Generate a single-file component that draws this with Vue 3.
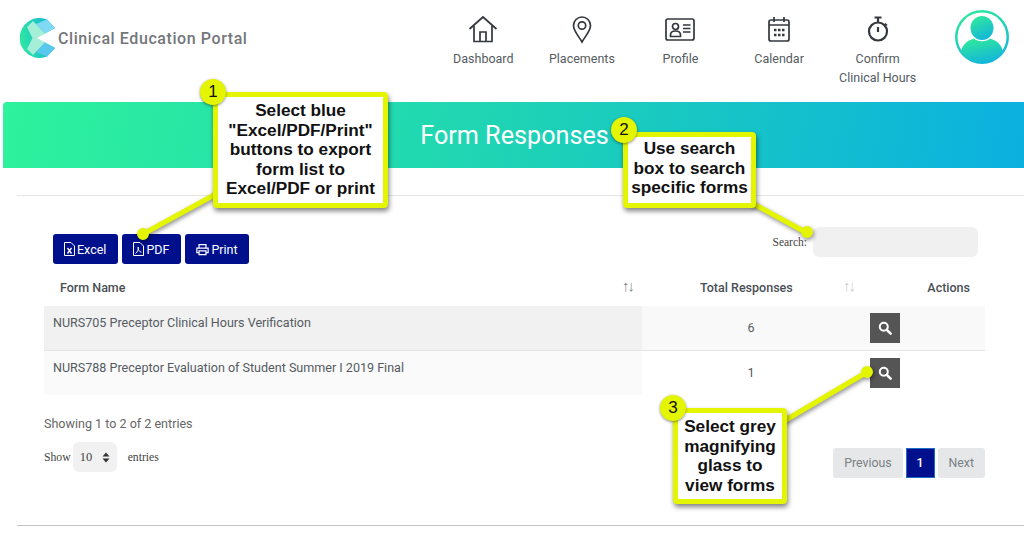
<script setup>
const navItems = [
  { label: 'Dashboard', icon: 'home' },
  { label: 'Placements', icon: 'pin' },
  { label: 'Profile', icon: 'card' },
  { label: 'Calendar', icon: 'cal' },
  { label: 'Confirm Clinical Hours', icon: 'watch' }
]
const rows = [
  { name: 'NURS705 Preceptor Clinical Hours Verification', total: 6 },
  { name: 'NURS788 Preceptor Evaluation of Student Summer I 2019 Final', total: 1 }
]
</script>

<template>
  <div class="page">
    <header class="top">
      <div class="brand">
        <svg class="logo" width="36" height="42" viewBox="0 0 36 42">
          <defs>
            <linearGradient id="lg" x1="0" y1="0.6" x2="1" y2="0.4">
              <stop offset="0" stop-color="#2fe8a0" />
              <stop offset="1" stop-color="#12b2dc" />
            </linearGradient>
          </defs>
          <path d="M35 10L27 1.4A20 20 0 1 0 27 38.6L35 30L24 24L12.5 20L24 16Z" fill="url(#lg)" />
          <path d="M7 9L12.5 20L7 31L13 37L25 24.5L17 20L25 15.500L13 3Z" fill="#a5eed8" />
          <path d="M27 1.600L35 10L25 15.500L16 6Z" fill="#7fd8f4" />
          <path d="M27 38.400L35 30L25 24.500L16 34Z" fill="#58c8ec" />
        </svg>
        <span class="brand-name">Clinical Education Portal</span>
      </div>
      <nav class="nav">
        <a v-for="item in navItems" :key="item.label" class="nav-item">
          <svg width="30" height="30" viewBox="0 0 30 30" fill="none" stroke="#33383e" stroke-width="1.7">
            <template v-if="item.icon === 'home'">
              <path d="M1.500 15L15 3L28.500 15" />
              <path d="M6 12V27.500H24V12" />
              <path d="M12 27.500V18H18V27.500" />
            </template>
            <template v-else-if="item.icon === 'pin'">
              <path d="M15 28C11 21 6.500 17 6.500 11.500A8.500 8.500 0 0 1 23.500 11.500C23.500 17 19 21 15 28Z" />
              <circle cx="15" cy="11.500" r="3.700" />
            </template>
            <template v-else-if="item.icon === 'card'">
              <rect x="1" y="5" width="28" height="21" rx="2" />
              <circle cx="10.500" cy="12.500" r="3" />
              <path d="M5.500 22.500V21C5.500 18 8 17 10.500 17C13 17 15.500 18 15.500 21V22.500Z" />
              <path d="M18 11H25.500M18 14.500H25.500M18 18H25.500" />
            </template>
            <template v-else-if="item.icon === 'cal'">
              <rect x="5" y="6" width="20" height="21" rx="2" />
              <path d="M5 11H25M10 3V8M20 3V8" />
              <path d="M10 16h2.500M14 16h2.500M18 16h2.500M10 21h2.500M14 21h2.500M18 21h2.500" stroke-width="2.600" />
            </template>
            <template v-else>
              <circle cx="15" cy="17.500" r="9" stroke-width="2.200" />
              <path d="M11.500 3.500H18.500M15 3.500V8.500" stroke-width="2.200" />
              <path d="M15 13V18" stroke-width="2.200" />
              <path d="M22 9.500L24 11.500" />
            </template>
          </svg>
          <span class="nav-label">{{ item.label }}</span>
        </a>
      </nav>
      <div class="avatar">
        <svg width="56" height="56" viewBox="0 0 56 56">
          <defs>
            <linearGradient id="av" x1="0.3" y1="0" x2="0.7" y2="1">
              <stop offset="0" stop-color="#2fe89c" />
              <stop offset="1" stop-color="#12b4dc" />
            </linearGradient>
          </defs>
          <circle cx="28" cy="28" r="27" fill="url(#av)" />
          <circle cx="28" cy="28" r="24.500" fill="#fff" />
          <ellipse cx="28" cy="19" rx="11.500" ry="12" fill="url(#av)" />
          <path d="M7 42C9 34 15 31 20 29.500C23 33 33 33 36 29.500C41 31 47 34 49 42A24.500 24.500 0 0 1 7 42Z" fill="url(#av)" />
        </svg>
      </div>
    </header>

    <section class="banner"><h1>Form Responses</h1></section>
    <hr class="rule" />

    <main class="content">
      <div class="tools">
        <div class="btns">
          <button class="btn">
            <svg width="11" height="14" viewBox="0 0 11 14" fill="none" stroke="#fff"><path d="M.5 .5H7L10.500 4V13.500H.5Z" /><path d="M3.500 6L7.500 11.500M7.500 6L3.500 11.500" stroke-width="1.300" /></svg>
            Excel
          </button>
          <button class="btn">
            <svg width="11" height="14" viewBox="0 0 11 14" fill="none" stroke="#fff"><path d="M.5 .5H7L10.500 4V13.500H.5Z" /><path d="M2.500 11.500C4.500 10 6 7 5.200 5C4.600 7 6 10 8.500 10.200" /></svg>
            PDF
          </button>
          <button class="btn">
            <svg width="13" height="13" viewBox="0 0 15 13" fill="none" stroke="#fff" stroke-width="1.400"><path d="M3.500 5V.8H11.500V5" /><path d="M3.500 10H1V5H14V10H11.500" /><path d="M3.500 8H11.500V12.300H3.500Z" /></svg>
            Print
          </button>
        </div>
        <label class="search"><span>Search:</span><input type="text" aria-label="Search" /></label>
      </div>

      <table class="table">
        <colgroup><col class="c1" /><col class="c2" /><col class="c3" /></colgroup>
        <thead>
          <tr>
            <th class="th-name">Form Name<span class="sort dark">↑↓</span></th>
            <th class="th-total">Total Responses<span class="sort">↑↓</span></th>
            <th class="th-act">Actions</th>
          </tr>
        </thead>
        <tbody>
          <tr v-for="(row, i) in rows" :key="row.name" :class="i === 0 ? 'odd' : 'even'">
            <td class="name">{{ row.name }}</td>
            <td class="total">{{ row.total }}</td>
            <td class="act">
              <button class="view" aria-label="View">
                <svg width="14" height="14" viewBox="0 0 14 14" fill="none" stroke="#fff"><circle cx="5.800" cy="5.800" r="4" stroke-width="2" /><path d="M8.800 8.800L12.600 12.600" stroke-width="2.600" stroke-linecap="round" /></svg>
              </button>
            </td>
          </tr>
        </tbody>
      </table>

      <div class="foot">
        <div class="foot-left">
          <p class="info">Showing 1 to 2 of 2 entries</p>
          <div class="length">
            <span>Show</span>
            <span class="select">10
              <svg width="8" height="11" viewBox="0 0 8 11" fill="#333"><path d="M4 .5L7.500 4.500H.5ZM4 10.500L.5 6.500H7.500Z" /></svg>
            </span>
            <span class="entries">entries</span>
          </div>
        </div>
        <div class="pager">
          <span class="pg">Previous</span>
          <span class="pg cur">1</span>
          <span class="pg">Next</span>
        </div>
      </div>
    </main>
    <hr class="rule bottom" />

    <svg class="lines" width="1024" height="535" viewBox="0 0 1024 535">
      <g stroke="#e4f500" stroke-width="5" fill="#e4f500">
        <path d="M216 194L143 234" />
        <circle cx="143" cy="234" r="3.500" />
        <path d="M752 203L807 233" />
        <circle cx="807" cy="232" r="3.500" />
        <path d="M784 421L867 372" />
        <circle cx="867" cy="372" r="3.500" />
      </g>
    </svg>
    <div class="call c-one"><span class="num">1</span>Select blue<br />"Excel/PDF/Print"<br />buttons to export<br />form list to<br />Excel/PDF or print</div>
    <div class="call c-two"><span class="num">2</span>Use search<br />box to search<br />specific forms</div>
    <div class="call c-three"><span class="num">3</span>Select grey<br />magnifying<br />glass to<br />view forms</div>
  </div>
</template>

<style>
html, body { margin: 0; background: #fff; }
</style>

<style scoped>
.page { position: relative; width: 1024px; height: 535px; overflow: hidden; background: #fff; font-family: Roboto, "Liberation Sans", sans-serif; color: #555b61; }
.top { display: flex; height: 102px; box-sizing: border-box; }
.brand { display: flex; align-items: flex-start; gap: 2px; padding: 18px 0 0 20px; width: 434px; box-sizing: border-box; }
.brand-name { font-size: 16px; font-weight: 500; letter-spacing: .58px; color: #74777a; margin-top: 11px; white-space: nowrap; }
.nav { display: flex; padding-top: 14px; }
.nav-item { width: 98.6px; display: flex; flex-direction: column; align-items: center; text-align: center; font-size: 12.5px; line-height: 19px; color: #555b61; }
.nav-label { margin-top: 5px; padding: 0 8px; }
.avatar { margin: 9px 0 0 27px; height: 56px; }
.banner { margin-left: 3px; height: 66px; border-radius: 4px 0 0 0; background: linear-gradient(100deg, #2ef29c 0%, #1ed3b5 50%, #0bb0e0 100%); display: flex; align-items: center; justify-content: center; }
.banner h1 { margin: 0 0 0 2px; font-size: 25.2px; font-weight: 400; color: #fff; }
.rule { margin: 27px 0 0 17px; border: 0; height: 1px; background: #e6e6e6; }
.rule.bottom { margin-top: 0; background: #c4c4c4; }
.content { height: 329px; box-sizing: border-box; padding: 31px 39px 0 44px; }
.tools { display: flex; justify-content: space-between; align-items: flex-start; height: 49px; padding: 0 7px 0 9px; }
.btns { display: flex; gap: 4px; padding-top: 7px; }
.btn { height: 30px; padding: 0 12px 0 11px; display: flex; align-items: center; gap: 2px; background: #000f8c; color: #fff; border: 0; border-radius: 3px; font: 12.5px Roboto, sans-serif; }
.btn:last-child { padding-right: 11px; }
.search { display: flex; align-items: center; gap: 6px; font: 11.5px "Liberation Serif", serif; color: #444; }
.search input { width: 165px; height: 30px; box-sizing: border-box; border: 0; border-radius: 6px; background: #f0f0f0; }
.table { width: 941px; border-collapse: collapse; table-layout: fixed; font-size: 12.5px; }
.c1 { width: 598px; }
.c2 { width: 218px; }
.c3 { width: 125px; }
th { height: 30px; padding: 0 0 8px; box-sizing: border-box; font-weight: 500; color: #4a4f55; position: relative; }
.th-name { text-align: left; padding-left: 16px; }
.th-total { text-align: left; padding-left: 58px; }
.th-act { text-align: right; padding-right: 15px; }
.sort { position: absolute; top: 1px; font-size: 15px; font-weight: 400; letter-spacing: -2px; color: #ccc; }
.th-name .sort { right: 9px; color: #888; }
.th-total .sort { right: 6px; }
td { height: 44px; padding: 0; box-sizing: border-box; border-bottom: 1px solid #e4e4e4; }
tr:last-child td { border-bottom: 0; height: 45px; }
.name { padding: 9px 0 0 9px; vertical-align: top; color: #555b61; font-size: 12.55px; }
.total { text-align: center; color: #555b61; }
.act { padding: 7px 0 0 10px; vertical-align: top; }
.odd .name { background: #f1f1f1; }
.even .name { background: #fafafa; }
.odd .total, .odd .act { background: #f9f9f9; }
.view { width: 30px; height: 30px; display: flex; align-items: center; justify-content: center; padding: 0; background: #555; border: 0; }
.foot { display: flex; justify-content: space-between; padding-top: 20px; }
.info { margin: 0; font-size: 12.55px; line-height: 18px; color: #666; }
.length { display: flex; align-items: center; margin-top: 9px; font: 11.7px "Liberation Serif", serif; color: #444; }
.select { width: 44px; height: 30px; margin-left: 2px; box-sizing: border-box; padding: 0 7px; display: flex; align-items: center; justify-content: space-between; background: #f1f1f1; border-radius: 6px; font-size: 12.5px; }
.entries { margin-left: 11px; }
.pager { display: flex; gap: 3px; margin-top: 33px; height: 30px; }
.pg { display: flex; align-items: center; justify-content: center; padding: 0 11px; background: #e5e7e9; color: #7b8085; border-radius: 3px; font-size: 12.3px; }
.pg.cur { width: 29px; padding: 0; box-sizing: border-box; background: #000f8c; color: #fff; font-weight: 500; border: 1px solid #1a6cc4; border-radius: 0; }
.lines { position: absolute; left: 0; top: 0; filter: drop-shadow(1px 2px 2px rgba(0,0,0,.45)); }
.call { position: absolute; box-sizing: border-box; background: #fff; border: 5px solid #e4f500; border-radius: 4px; box-shadow: 1px 3px 5px rgba(0,0,0,.5); text-align: center; font: bold 17.2px/19.6px "Liberation Sans", Arial, sans-serif; color: #111; white-space: nowrap; }
.c-one { left: 213px; top: 92px; width: 175px; height: 116px; padding-top: 4px; }
.c-two { left: 623px; top: 132px; width: 133px; height: 76px; padding-top: 2px; }
.c-three { left: 673px; top: 408px; width: 114px; height: 96px; padding-top: 4px; }
.num { position: absolute; width: 26px; height: 26px; left: -18px; top: -18px; border-radius: 50%; background: #e4f500; box-shadow: 0 1px 3px rgba(0,0,0,.45); font-weight: 400; font-size: 17px; line-height: 26px; }
.c-two .num { top: -20px; left: -17px; }
</style>
